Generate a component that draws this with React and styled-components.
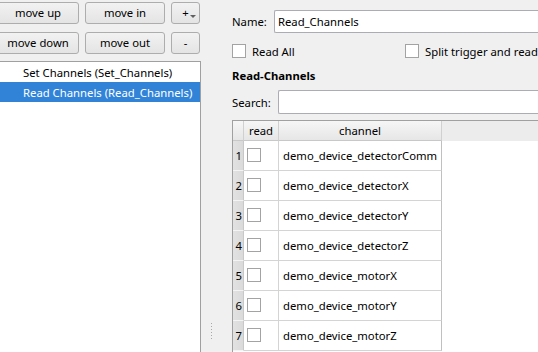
import React from "react";
import styled, { createGlobalStyle } from "styled-components";

const Global = createGlobalStyle`
  html, body { margin: 0; padding: 0; background: #f0f0f0; }
  body { width: 538px; height: 352px; overflow: hidden; font-family: "Noto Sans", "Open Sans", sans-serif; font-size: 11.3px; color: #000; }
  #root { width: 538px; height: 352px; overflow: hidden; }
`;

const Page = styled.div`
  display: flex;
  width: 538px;
  height: 352px;
  overflow: hidden;
  background: #f0f0f0;
`;

const Left = styled.div`
  flex: 0 0 204px;
  min-width: 0;
  overflow: hidden;
  margin-left: -3px;
  display: flex;
  flex-direction: column;
  padding-top: 2px;
`;

const ButtonGrid = styled.div`
  display: grid;
  grid-template-columns: 82px 80px 29px;
  grid-auto-rows: 22px;
  column-gap: 6px;
  row-gap: 8px;
`;

const Btn = styled.button`
  position: relative;
  font-family: "Noto Sans", "Open Sans", sans-serif;
  font-size: 11.3px;
  color: #000;
  padding: 0;
  margin: 0;
  border: 1px solid #adadad;
  border-radius: 3px;
  background: linear-gradient(#f2f2f2, #e4e4e4);
  display: flex;
  align-items: center;
  justify-content: center;
  line-height: 1;
`;

const Arrow = styled.span`
  position: absolute;
  right: 3px;
  bottom: 5px;
  width: 0;
  height: 0;
  border-left: 3px solid transparent;
  border-right: 3px solid transparent;
  border-top: 3px solid #606060;
`;

const List = styled.div`
  margin-top: 7px;
  flex: 1;
  background: #fff;
  border: 1px solid #a0a0a0;
  border-bottom: none;
  min-width: 0;
`;

const Item = styled.div`
  height: 20px;
  display: flex;
  align-items: center;
  padding-left: 25px;
  white-space: nowrap;
  background: ${(p) => (p.$selected ? "#3183d8" : "transparent")};
  color: ${(p) => (p.$selected ? "#fff" : "#000")};
`;

const Right = styled.div`
  flex: 1;
  position: relative;
  padding: 10px 0 0 31px;
  display: flex;
  flex-direction: column;
  min-width: 0;
`;

const Handle = styled.div`
  position: absolute;
  left: 10px;
  top: 323px;
  display: flex;
  flex-direction: column;
  gap: 2px;
  & > span {
    width: 1px;
    height: 1px;
    background: #a8a8a8;
  }
`;

const FieldRow = styled.div`
  display: flex;
  align-items: center;
  gap: ${(p) => p.$gap}px;
  height: ${(p) => p.$h}px;
  margin-top: ${(p) => p.$mt || 0}px;
`;

const Label = styled.span`
  white-space: nowrap;
`;

const Input = styled.div`
  flex: 1;
  height: 100%;
  box-sizing: border-box;
  background: #fff;
  border: 1px solid #abadb3;
  border-right: none;
  border-radius: 2px 0 0 2px;
  display: flex;
  align-items: center;
  padding-left: 3px;
  white-space: nowrap;
`;

const CheckRow = styled.div`
  display: flex;
  align-items: center;
  height: 14px;
  margin-top: 11px;
`;

const Check = styled.label`
  display: flex;
  align-items: center;
  gap: 6px;
  width: ${(p) => p.$w || "auto"};
  white-space: nowrap;
`;

const Box = styled.span`
  width: 12px;
  height: 12px;
  box-sizing: content-box;
  background: #fff;
  border: 1px solid #a3a3a3;
  flex: 0 0 auto;
`;

const Title = styled.div`
  font-weight: bold;
  margin-top: 11px;
  height: 14px;
  line-height: 14px;
`;

const Table = styled.div`
  margin-top: 6px;
  border-top: 1px solid #a0a0a0;
  border-left: 1px solid #a0a0a0;
  display: flex;
  flex-direction: column;
  background: #fff;
  flex: 1;
`;

const HeaderRow = styled.div`
  display: flex;
  height: 20px;
  background: #ececec;
`;

const HeadCell = styled.div`
  flex: 0 0 ${(p) => p.$w}px;
  box-sizing: border-box;
  border-right: 1px solid #d0d0d0;
  border-bottom: 1px solid #c8c8c8;
  background: linear-gradient(#f6f6f6, #e6e6e6);
  display: flex;
  align-items: center;
  justify-content: center;
`;

const Row = styled.div`
  display: flex;
  height: 30px;
`;

const NumCell = styled.div`
  flex: 0 0 11px;
  box-sizing: border-box;
  background: linear-gradient(90deg, #e2e2e2, #dadada);
  border-right: 1px solid #c8c8c8;
  border-bottom: 1px solid #f4f4f4;
  display: flex;
  align-items: center;
  justify-content: flex-end;
  padding-right: 1px;
`;

const Cell = styled.div`
  flex: 0 0 ${(p) => p.$w}px;
  box-sizing: border-box;
  overflow: hidden;
  border-right: 1px solid ${(p) => (p.$last ? "#c0c0c0" : "#d4d4d4")};
  border-bottom: 1px solid #d4d4d4;
  display: flex;
  align-items: center;
  padding-left: ${(p) => p.$pl}px;
  white-space: nowrap;
`;

const CellBox = styled(Box)`
  margin-top: -2px;
`;

const channels = [
  "demo_device_detectorComm",
  "demo_device_detectorX",
  "demo_device_detectorY",
  "demo_device_detectorZ",
  "demo_device_motorX",
  "demo_device_motorY",
  "demo_device_motorZ",
];

export default function App() {
  return (
    <Page>
      <Global />
      <Left>
        <ButtonGrid>
          <Btn>move up</Btn>
          <Btn>move in</Btn>
          <Btn>
            +<Arrow />
          </Btn>
          <Btn>move down</Btn>
          <Btn>move out</Btn>
          <Btn>-</Btn>
        </ButtonGrid>
        <List>
          <Item>Set Channels (Set_Channels)</Item>
          <Item $selected>Read Channels (Read_Channels)</Item>
        </List>
      </Left>
      <Right>
        <Handle>
          {Array.from({ length: 6 }).map((_, i) => (
            <span key={i} />
          ))}
        </Handle>
        <FieldRow $gap={7} $h={23}>
          <Label>Name:</Label>
          <Input>Read_Channels</Input>
        </FieldRow>
        <CheckRow>
          <Check $w="173px">
            <Box />
            Read All
          </Check>
          <Check>
            <Box />
            Split trigger and read
          </Check>
        </CheckRow>
        <Title>Read-Channels</Title>
        <FieldRow $gap={7} $h={24} $mt={7}>
          <Label>Search:</Label>
          <Input />
        </FieldRow>
        <Table>
          <HeaderRow>
            <HeadCell $w={11} />
            <HeadCell $w={35}>read</HeadCell>
            <HeadCell $w={163}>channel</HeadCell>
          </HeaderRow>
          {channels.map((c, i) => (
            <Row key={c}>
              <NumCell>{i + 1}</NumCell>
              <Cell $w={35} $pl={3}>
                <CellBox />
              </Cell>
              <Cell $w={163} $pl={4} $last>
                {c}
              </Cell>
            </Row>
          ))}
        </Table>
      </Right>
    </Page>
  );
}
